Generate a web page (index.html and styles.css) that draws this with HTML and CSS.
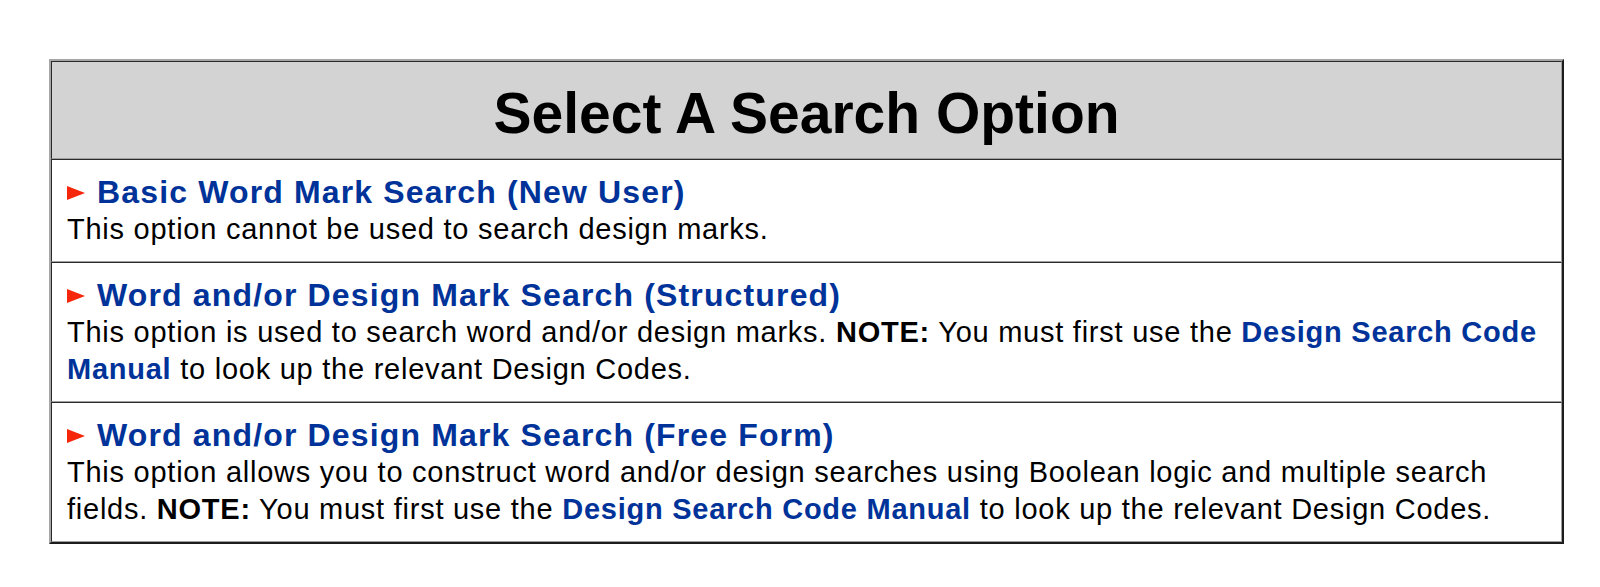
FILE: index.html
```html
<!DOCTYPE html>
<html>
<head>
<meta charset="utf-8">
<link rel="stylesheet" href="styles.css">
</head>
<body>
<div class="page">
  <div class="panel">
    <div class="cell head"><h1 class="title">Select A Search Option</h1></div>
    <div class="cell">
      <div class="opt"><span class="arrow"></span><a class="link" href="#">Basic Word Mark Search (New User)</a></div>
      <p class="desc">This option cannot be used to search design marks.</p>
    </div>
    <div class="cell">
      <div class="opt"><span class="arrow"></span><a class="link" href="#">Word and/or Design Mark Search (Structured)</a></div>
      <p class="desc">This option is used to search word and/or design marks. <b>NOTE:</b> You must first use the <a class="inl" href="#">Design Search Code Manual</a> to look up the relevant Design Codes.</p>
    </div>
    <div class="cell">
      <div class="opt"><span class="arrow"></span><a class="link" href="#">Word and/or Design Mark Search (Free Form)</a></div>
      <p class="desc">This option allows you to construct word and/or design searches using Boolean logic and multiple search fields. <b>NOTE:</b> You must first use the <a class="inl" href="#">Design Search Code Manual</a> to look up the relevant Design Codes.</p>
    </div>
  </div>
</div>
</body>
</html>
```
FILE: styles.css
```css
html, body {
  margin: 0;
  padding: 0;
  background: #ffffff;
}
body {
  font-family: "Liberation Sans", Arial, sans-serif;
  color: #000;
}
.page {
  padding: 59px 36px 0 49px;
}
.panel {
  width: 1515px;
  box-sizing: border-box;
  border-style: solid;
  border-width: 2px;
  border-color: #a6a6a6 #1c1c1c #1c1c1c #a6a6a6;
  display: flex;
  flex-direction: column;
}
.cell {
  border-style: solid;
  border-width: 1px;
  border-color: #2a2a2a #a0a0a0 #a0a0a0 #2a2a2a;
  padding: 14px 12px 13px 15px;
}
.cell.head {
  background: #d3d3d3;
  padding: 0;
  height: 96px;
  display: flex;
  align-items: center;
  justify-content: center;
}
.title {
  margin: 0;
  font-size: 57px;
  font-weight: bold;
  line-height: 64px;
  padding-top: 5px;
}
.opt {
  display: flex;
  align-items: center;
  gap: 12px;
  line-height: 37px;
}
.arrow {
  width: 0;
  height: 0;
  border-style: solid;
  border-width: 7px 0 7px 18px;
  border-color: transparent transparent transparent #f5260a;
}
.link {
  font-size: 32px;
  font-weight: bold;
  letter-spacing: 1.15px;
  color: #003399;
  text-decoration: none;
}
.desc {
  margin: 0;
  font-size: 29px;
  letter-spacing: 0.75px;
  line-height: 37px;
}
.desc b {
  font-weight: bold;
}
.inl {
  color: #003399;
  font-weight: bold;
  text-decoration: none;
}
```
